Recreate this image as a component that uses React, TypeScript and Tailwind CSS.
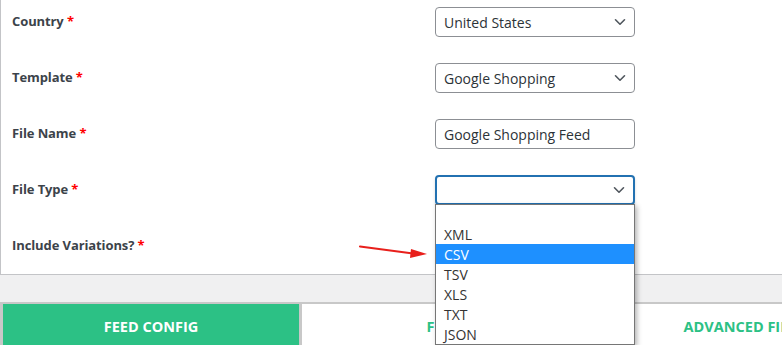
const fields = [
  { label: "Country", kind: "select", value: "United States" },
  { label: "Template", kind: "select", value: "Google Shopping" },
  { label: "File Name", kind: "input", value: "Google Shopping Feed" },
  { label: "File Type", kind: "focus", value: "" },
  { label: "Include Variations?", kind: "none", value: "" },
];

const fileTypes = ["", "XML", "CSV", "TSV", "XLS", "TXT", "JSON"];

const Chevron = () => (
  <svg width="12" height="8" viewBox="0 0 12 8" className="absolute right-[8px] top-1/2 -translate-y-1/2">
    <path d="M1.5 1.75 6 6.25l4.5-4.5" fill="none" stroke="#50575e" strokeWidth="1.6" strokeLinecap="round" strokeLinejoin="round" />
  </svg>
);

const Control = ({ kind, value }: { kind: string; value: string }) => {
  if (kind === "none") return <div className="h-[30px]" />;
  if (kind === "focus")
    return (
      <div className="relative h-[30px] w-[200px] rounded-[4px] border-2 border-[#2271b1] bg-white shadow-[0_2px_3px_rgba(0,0,0,0.15)]">
        <Chevron />
      </div>
    );
  return (
    <div className="relative flex h-[30px] w-[200px] items-center rounded-[4px] border border-[#8c8f94] bg-white pl-[8px] text-[14px] text-[#2c3338]">
      {value}
      {kind === "select" && <Chevron />}
    </div>
  );
};

const tabs = [
  { name: "FEED CONFIG", active: true },
  { name: "FILTER", active: false },
  { name: "ADVANCED FILTER", active: false },
];

export default function App() {
  return (
    <div className="relative h-[345px] w-[782px] overflow-hidden bg-white font-['Open_Sans',sans-serif]">
      <div className="border-b border-l border-[#c3c4c7] bg-white pb-[13px] pl-[11px] pt-[7px]">
        <div className="flex flex-col gap-[26px]">
          {fields.map((f) => (
            <div key={f.label} className="grid grid-cols-[423px_200px] items-center">
              <div className="text-[13px] font-bold tracking-[-0.1px] text-[#3c434a]">
                {f.label} <span className="text-[#ff0000]">*</span>
              </div>
              <Control kind={f.kind} value={f.value} />
            </div>
          ))}
        </div>
      </div>

      <div className="h-[27px] bg-[#f0f0f1]" />

      <div className="flex gap-[3px] bg-[#c8c8c8] pl-[3px] pt-[2px]">
        {tabs.map((t) => (
          <div
            key={t.name}
            className={`flex h-[46px] w-[296px] shrink-0 items-center justify-center text-[14.5px] font-bold ${
              t.active ? "bg-[#2cc185] text-white" : "bg-white text-[#2cc185]"
            }`}
          >
            {t.name}
          </div>
        ))}
      </div>

      <div className="absolute left-[435px] top-[204px] w-[200px] border border-[#767676] bg-white shadow-[2px_2px_5px_rgba(0,0,0,0.3)]">
        {fileTypes.map((t, i) => (
          <div
            key={i}
            className={`flex items-center pl-[8px] text-[14px] ${i === 0 ? "h-[19px]" : "h-[20px]"} ${
              t === "CSV" ? "bg-[#1e90ff] text-white" : "text-[#333]"
            }`}
          >
            {t}
          </div>
        ))}
      </div>

      <svg className="absolute left-[355px] top-[240px]" width="80" height="24" viewBox="0 0 80 24">
        <path d="M5 6.5 58 13.5" stroke="#e8201c" strokeWidth="2.2" strokeLinecap="round" />
        <path d="M56 9 72 14 55 18Z" fill="#e8201c" />
      </svg>
    </div>
  );
}
